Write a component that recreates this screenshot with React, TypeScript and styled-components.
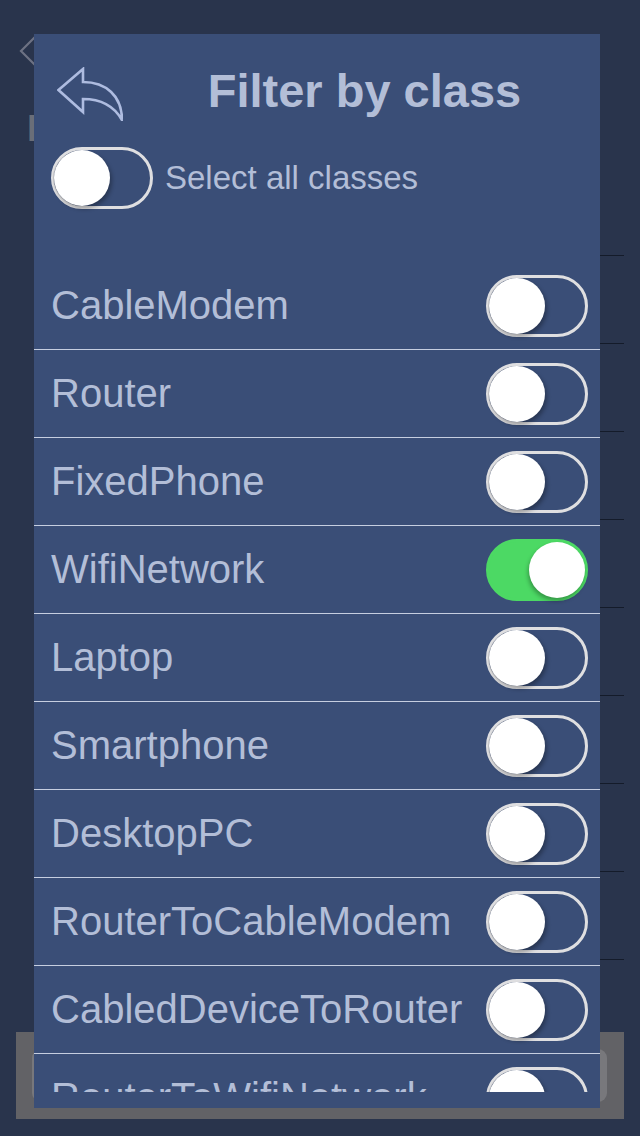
import React from "react";
import styled, { createGlobalStyle } from "styled-components";

const GlobalStyle = createGlobalStyle`
  html, body { margin: 0; padding: 0; background: #29344c; }
  body { font-family: "Liberation Sans", Arial, sans-serif; }
  * { box-sizing: border-box; }
`;

const Screen = styled.div`
  position: relative;
  width: 640px;
  height: 1136px;
  overflow: hidden;
  background: #29344c;
`;

/* ---------- underlying screen ---------- */
const BackScreen = styled.div`
  display: flex;
  flex-direction: column;
  height: 100%;
`;

const NavBar = styled.div`
  height: 80px;
  padding: 35px 0 0 19px;
`;

const BackHeading = styled.div`
  padding: 27px 0 17px 27px;
  font-size: 37px;
  line-height: 44px;
  font-weight: 700;
  color: #6a6e78;
`;

const BackRow = styled.div`
  height: 88px;
  margin: 0 16px 0 40px;
  border-bottom: 1px solid #141b2a;
`;

const Toolbar = styled.div`
  margin: auto 16px 17px 16px;
  height: 87px;
  background: #626266;
  padding: 17px 17px 17px 16px;
`;

const ToolbarField = styled.div`
  height: 53px;
  border-radius: 9px;
  background: #78787c;
`;

/* ---------- overlay panel ---------- */
const Panel = styled.div`
  position: absolute;
  left: 34px;
  top: 34px;
  width: 566px;
  height: 1074px;
  background: #3a4e77;
  display: flex;
  flex-direction: column;
  padding: 30px 0 16px 0;
`;

const Header = styled.div`
  display: flex;
  align-items: flex-start;
  padding-left: 23px;
  height: 57px;
`;

const BackButton = styled.div`
  width: 66px;
  height: 54px;
  margin-top: 3px;
  flex-shrink: 0;
`;

const Title = styled.div`
  flex: 1;
  text-align: center;
  padding-left: 6px;
  font-size: 47px;
  line-height: 54px;
  font-weight: 700;
  color: #b3bed7;
  white-space: nowrap;
`;

const SelectAllRow = styled.div`
  display: flex;
  align-items: center;
  gap: 12px;
  margin-top: 26px;
  padding-left: 17px;
  height: 62px;
`;

const SelectAllLabel = styled.span`
  font-size: 33px;
  color: #b3bed7;
`;

const List = styled.div`
  margin-top: 53px;
  height: 830px;
  overflow: hidden;
`;

const Row = styled.div`
  display: flex;
  align-items: center;
  justify-content: space-between;
  height: 88px;
  flex-shrink: 0;
  padding: 0 12px 0 17px;
  border-bottom: 1px solid #c6cee0;
`;

const RowLabel = styled.span`
  font-size: 40px;
  color: #b3bed7;
  white-space: nowrap;
`;

const Track = styled.div<{ $on: boolean }>`
  position: relative;
  width: 102px;
  height: 62px;
  flex-shrink: 0;
  border-radius: 31px;
  border: 3px solid ${(p) => (p.$on ? "#4cd964" : "#dfdfe1")};
  background: ${(p) => (p.$on ? "#4cd964" : "transparent")};
`;

const Knob = styled.div<{ $on: boolean }>`
  position: absolute;
  top: 0;
  left: ${(p) => (p.$on ? "40px" : "0px")};
  width: 56px;
  height: 56px;
  border-radius: 50%;
  background: #ffffff;
  box-shadow: ${(p) =>
    p.$on
      ? "-1px 3px 4px rgba(0,0,0,0.3)"
      : "2px 3px 4px rgba(0,0,0,0.3), -1px 0 0 rgba(0,0,0,0.12)"};
`;

const Toggle = ({ on }: { on: boolean }) => (
  <Track $on={on}>
    <Knob $on={on} />
  </Track>
);

const classes: { name: string; on: boolean }[] = [
  { name: "CableModem", on: false },
  { name: "Router", on: false },
  { name: "FixedPhone", on: false },
  { name: "WifiNetwork", on: true },
  { name: "Laptop", on: false },
  { name: "Smartphone", on: false },
  { name: "DesktopPC", on: false },
  { name: "RouterToCableModem", on: false },
  { name: "CabledDeviceToRouter", on: false },
  { name: "RouterToWifiNetwork", on: false },
];

export default function App() {
  return (
    <>
      <GlobalStyle />
      <Screen>
        <BackScreen>
          <NavBar>
            <svg width="20" height="32" viewBox="0 0 20 32">
              <polyline
                points="16,2 2,16 16,30"
                fill="none"
                stroke="#6d7283"
                strokeWidth="2.2"
              />
            </svg>
          </NavBar>
          <BackHeading>Presets</BackHeading>
          {Array.from({ length: 9 }).map((_, i) => (
            <BackRow key={i} />
          ))}
          <Toolbar>
            <ToolbarField />
          </Toolbar>
        </BackScreen>

        <Panel>
          <Header>
            <BackButton>
              <svg width="66" height="54" viewBox="0 0 66 54">
                <path
                  d="M1.5,23 L26,2 L26,15 C49,15 65,29 65,53 C57,39 44,32 26,32 L26,45 Z"
                  fill="none"
                  stroke="#aebce0"
                  strokeWidth="2.6"
                  strokeLinejoin="miter"
                />
              </svg>
            </BackButton>
            <Title>Filter by class</Title>
          </Header>
          <SelectAllRow>
            <Toggle on={false} />
            <SelectAllLabel>Select all classes</SelectAllLabel>
          </SelectAllRow>
          <List>
            {classes.map((c) => (
              <Row key={c.name}>
                <RowLabel>{c.name}</RowLabel>
                <Toggle on={c.on} />
              </Row>
            ))}
          </List>
        </Panel>
      </Screen>
    </>
  );
}
